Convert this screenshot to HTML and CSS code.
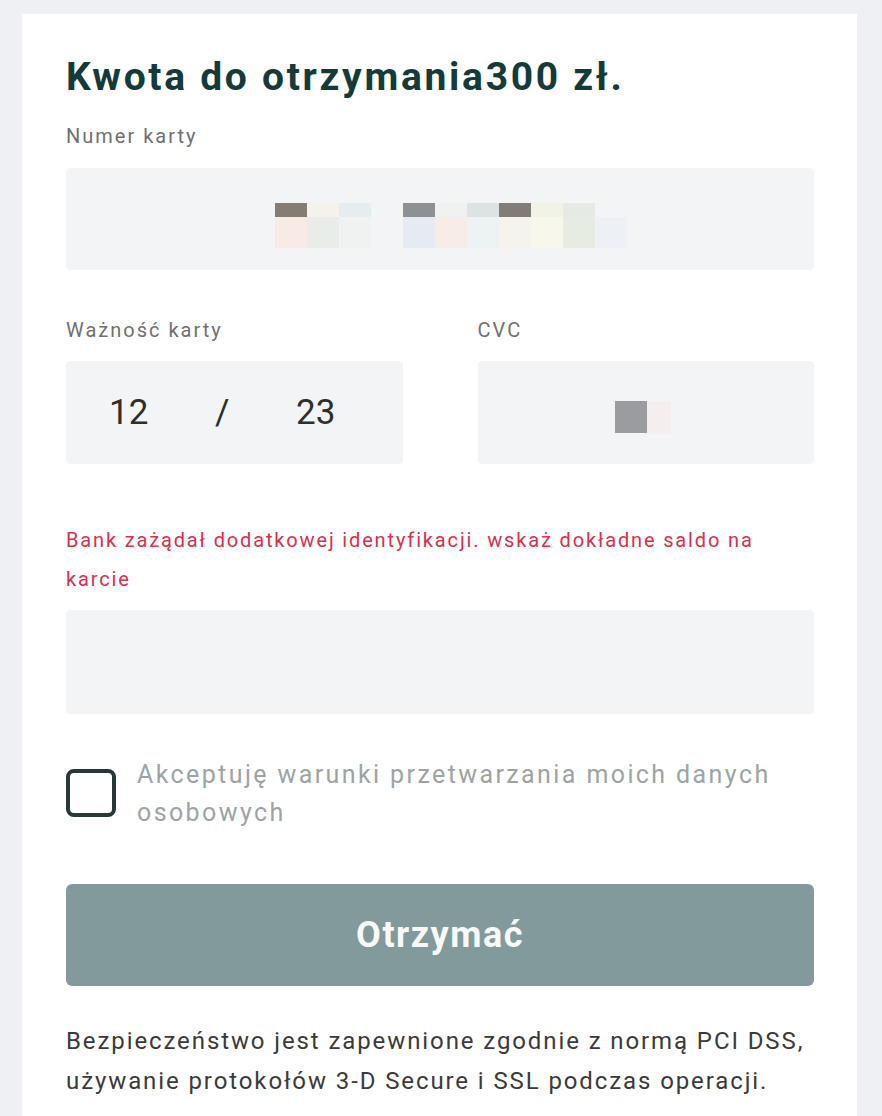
FILE: index.html
```html
<!DOCTYPE html>
<html lang="pl">
<head>
  <meta charset="UTF-8">
  <meta name="viewport" content="width=device-width, initial-scale=1.0">
  <title>Kwota do otrzymania</title>
  <link rel="stylesheet" href="styles.css">
</head>
<body>
  <div class="card">
    <h1 class="title">Kwota do otrzymania300 zł.</h1>

    <div class="label">Numer karty</div>
    <div class="field field-number">
      <div class="mosaic">
        <span class="px dark"></span><span class="px cream"></span><span class="px ice"></span><span class="px"></span>
        <span class="px grey"></span><span class="px mist"></span><span class="px cloud"></span><span class="px dark2"></span>
        <span class="px lime"></span><span class="px sage"></span><span class="px"></span>
        <span class="px blush"></span><span class="px fog"></span><span class="px mist"></span><span class="px"></span>
        <span class="px sky"></span><span class="px peach"></span><span class="px frost"></span><span class="px linen"></span>
        <span class="px ivory"></span><span class="px sage2"></span><span class="px frost2"></span>
      </div>
    </div>

    <div class="row">
      <div class="col">
        <div class="label">Ważność karty</div>
        <div class="field field-exp">
          <span class="exp-mm">12</span>
          <span class="exp-sep">/</span>
          <span class="exp-yy">23</span>
        </div>
      </div>
      <div class="col">
        <div class="label">CVC</div>
        <div class="field field-cvc">
          <span class="cvc-px"></span>
          <span class="cvc-px faint"></span>
        </div>
      </div>
    </div>

    <p class="error">Bank zażądał dodatkowej identyfikacji. wskaż dokładne saldo na karcie</p>
    <div class="field field-balance"></div>

    <div class="agree">
      <span class="checkbox"></span>
      <span class="agree-text">Akceptuję warunki przetwarzania moich danych osobowych</span>
    </div>

    <div class="submit-btn">Otrzymać</div>

    <p class="secure">Bezpieczeństwo jest zapewnione zgodnie z normą PCI DSS, używanie protokołów 3-D Secure i SSL podczas operacji.</p>
  </div>
</body>
</html>
```

FILE: styles.css
```css
* {
  margin: 0;
  padding: 0;
  box-sizing: border-box;
}

body {
  font-family: Roboto, "Liberation Sans", Arial, sans-serif;
  background: #eef0f3;
  min-height: 100vh;
  overflow: hidden;
}

.card {
  background: #fff;
  margin: 14px 25px 0 22px;
  padding: 40px 43px 40px 44px;
  min-height: 1102px;
}

.title {
  font-size: 39px;
  font-weight: 700;
  line-height: 47px;
  letter-spacing: 2.7px;
  color: #143a3a;
}

.label {
  font-size: 20px;
  line-height: 24px;
  letter-spacing: 2px;
  color: #6f7070;
  margin-top: 23px;
  margin-bottom: 20px;
}

.field {
  background: #f3f4f6;
  border-radius: 4px;
  height: 102px;
}

.field-number {
  padding: 35px 0 0 209px;
}

.mosaic {
  display: grid;
  grid-template-columns: repeat(11, 32px);
  grid-template-rows: 14px 31px;
}

.px.dark { background: #857c74; }
.px.dark2 { background: #817c77; }
.px.grey { background: #8e9194; }
.px.cream { background: #f4f2ea; }
.px.ice { background: #e6edf1; }
.px.mist { background: #f0f2f2; }
.px.cloud { background: #dde2e2; }
.px.lime { background: #f1f3e6; }
.px.sage { background: #e5eae5; }
.px.blush { background: #f8ebe6; }
.px.fog { background: #e9edea; }
.px.sky { background: #e6eaf2; }
.px.peach { background: #f7ece6; }
.px.frost { background: #edf2f2; }
.px.linen { background: #f4f3ee; }
.px.ivory { background: #f7f7ec; }
.px.sage2 { background: #e7ece3; }
.px.frost2 { background: #edf1f5; }

.row {
  display: grid;
  grid-template-columns: 1fr 1fr;
  gap: 75px;
}

.row .label {
  margin-top: 48px;
  margin-bottom: 19px;
}

.field-exp {
  display: flex;
  align-items: center;
  padding-left: 43px;
  height: 103px;
  font-size: 35px;
  line-height: 1;
  color: #2e2e2e;
}

.exp-mm {
  width: 102px;
}

.exp-sep {
  width: 85px;
  padding-left: 4px;
}

.field-cvc {
  display: flex;
  align-items: center;
  padding: 8px 0 0 137px;
  height: 103px;
}

.cvc-px {
  width: 32px;
  height: 32px;
  background: #9a9ca0;
}

.cvc-px.faint {
  width: 24px;
  background: #f5eeee;
}

.error {
  font-size: 20px;
  line-height: 39px;
  letter-spacing: 1.85px;
  color: #d9304e;
  margin-top: 57px;
  margin-bottom: 11px;
}

.field-balance {
  height: 104px;
}

.agree {
  display: flex;
  align-items: flex-start;
  gap: 21px;
  margin-top: 42px;
}

.checkbox {
  flex: none;
  width: 50px;
  height: 48px;
  margin-top: 13px;
  border: 4px solid #263838;
  border-radius: 8px;
}

.agree-text {
  font-size: 25px;
  line-height: 38px;
  letter-spacing: 2.4px;
  color: #9da3a3;
}

.submit-btn {
  margin-top: 52px;
  height: 102px;
  border-radius: 6px;
  background: #829a9b;
  color: #f7f9f9;
  font-size: 36px;
  font-weight: 700;
  letter-spacing: 1.5px;
  display: flex;
  align-items: center;
  justify-content: center;
}

.secure {
  margin-top: 35px;
  font-size: 24px;
  line-height: 40px;
  letter-spacing: 1.9px;
  color: #3a3a3a;
}
```
